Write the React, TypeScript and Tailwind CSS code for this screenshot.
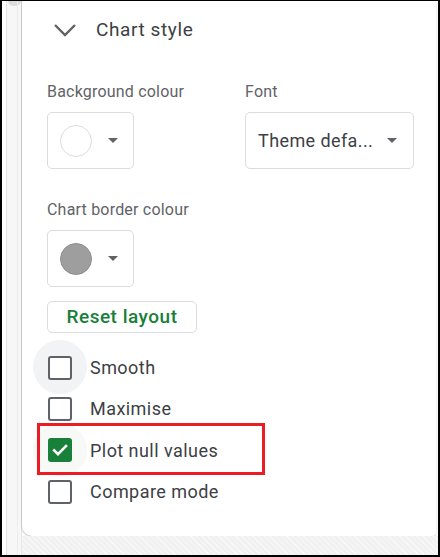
import React from "react";

const font = { fontFamily: "Roboto, 'Noto Sans', Arial, sans-serif" };

function Caret({ className = "" }: { className?: string }) {
  return (
    <svg width="10" height="5" viewBox="0 0 10 5" className={className}>
      <path d="M0 0 L10 0 L5 5 Z" fill="#5f6368" />
    </svg>
  );
}

function ColourButton({ filled }: { filled?: boolean }) {
  return (
    <div className="flex h-[57px] w-[87px] items-center rounded-[5px] border border-[#dadce0] bg-white pl-[12px]">
      <div
        className={
          filled
            ? "h-[32px] w-[32px] rounded-full border border-[#8f8f8f] bg-[#9e9e9e]"
            : "h-[32px] w-[32px] rounded-full border border-[#dadce0] bg-white"
        }
      />
      <Caret className="ml-[16px]" />
    </div>
  );
}

function Check({ label, checked, hover, faint }: { label: string; checked?: boolean; hover?: boolean; faint?: boolean }) {
  return (
    <div className="relative flex h-[41.3px] items-center">
      {hover && <div className="absolute left-[-14px] top-[-7px] h-[54px] w-[54px] rounded-full bg-[#f1f3f4]" />}
      {faint && <div className="absolute left-[-14px] top-[-7px] h-[54px] w-[54px] rounded-full bg-[#f7f9f7]" />}
      {checked ? (
        <div className="relative ml-[1px] flex h-[24px] w-[24px] items-center justify-center rounded-[3px] bg-[#188038]">
          <svg width="18" height="18" viewBox="0 0 18 18">
            <path d="M3.2 9.4 L7 13.2 L15 5" fill="none" stroke="#fff" strokeWidth="2.6" strokeLinecap="square" />
          </svg>
        </div>
      ) : (
        <div className="relative ml-[1px] h-[24px] w-[24px] rounded-[3px] border-2 border-[#5f6368] bg-white" />
      )}
      <span className="relative ml-[18px] text-[18px] tracking-[0.45px] text-[#3c4043]">{label}</span>
    </div>
  );
}

export default function App() {
  const gridLines = Array.from({ length: 19 }, (_, i) => i);
  return (
    <div
      className="flex h-[557px] w-[440px] flex-col overflow-hidden border-b-2 border-l-2 border-r-2 border-t border-black bg-white"
      style={font}
    >
      <div className="flex min-h-0 flex-1">
        {/* left strip */}
        <div className="flex w-[20px] shrink-0">
          <div className="flex w-[4px] flex-col bg-white pt-[26px]">
            {gridLines.map((i) => (
              <div key={i} className="mb-[28.5px] h-px bg-[#e0e0e0]" />
            ))}
          </div>
          <div className="w-px bg-[#e3e3e3]" />
          <div className="relative flex-1 bg-[#f7f7f7]">
            <div className="absolute left-[1px] top-[-6px] h-[11px] w-[13px] rounded-full bg-[#dadce0]" />
            <div className="absolute left-[10px] top-0 h-full w-px bg-[#ececec]" />
          </div>
          <div className="w-px bg-[#e6e6e6]" />
        </div>
        {/* right area */}
        <div className="flex min-w-0 flex-1 flex-col">
          <div className="mr-[2px] flex flex-1 flex-col rounded-bl-[10px] rounded-br-[4px] bg-white pl-[25px] shadow-[0_1px_2px_rgba(60,64,67,0.25),-1px_0_1px_rgba(60,64,67,0.12)]">
            <div className="flex h-[58px] items-center">
              <svg width="24" height="14" viewBox="0 0 24 14" className="ml-[6px]">
                <path d="M2 2 L12 12 L22 2" fill="none" stroke="#5f6368" strokeWidth="2.4" />
              </svg>
              <span className="ml-[19px] text-[19px] tracking-[0.6px] text-[#3c4043]">Chart style</span>
            </div>

            <div className="mt-[23px] flex">
              <div className="w-[198px]">
                <div className="h-[20px] text-[16px] leading-[20px] tracking-[0.2px] text-[#5f6368]">Background colour</div>
                <div className="mt-[10px]">
                  <ColourButton />
                </div>
              </div>
              <div>
                <div className="h-[20px] text-[16px] leading-[20px] tracking-[0.2px] text-[#5f6368]">Font</div>
                <div className="mt-[10px] flex h-[57px] w-[169px] items-center justify-between rounded-[5px] border border-[#dadce0] pl-[12px] pr-[16px]">
                  <span className="text-[18px] tracking-[0.4px] text-[#3c4043]">Theme defa...</span>
                  <Caret />
                </div>
              </div>
            </div>

            <div className="mt-[31px] h-[20px] text-[16px] leading-[20px] tracking-[0.2px] text-[#5f6368]">Chart border colour</div>
            <div className="mt-[10px]">
              <ColourButton filled />
            </div>

            <div className="mt-[14px] flex h-[32px] w-[150px] items-center justify-center rounded-[5px] border border-[#dadce0] pt-[1px] text-[19px] font-medium tracking-[0.5px] text-[#188038]">
              Reset layout
            </div>

            <div className="mt-[14px] flex flex-col">
              <Check label="Smooth" hover />
              <Check label="Maximise" />
              <div className="relative">
                <Check label="Plot null values" checked faint />
                <div className="pointer-events-none absolute left-[-10px] top-[-7px] h-[52px] w-[228px] border-[3px] border-[#ec1c24]" />
              </div>
              <Check label="Compare mode" />
            </div>
          </div>
          <div
            className="h-[19px] shrink-0 bg-[#f1f1f1]"
            style={{
              backgroundImage:
                "repeating-linear-gradient(45deg, rgba(255,255,255,0.5) 0 1px, transparent 1px 4px)",
            }}
          />
        </div>
      </div>
    </div>
  );
}
